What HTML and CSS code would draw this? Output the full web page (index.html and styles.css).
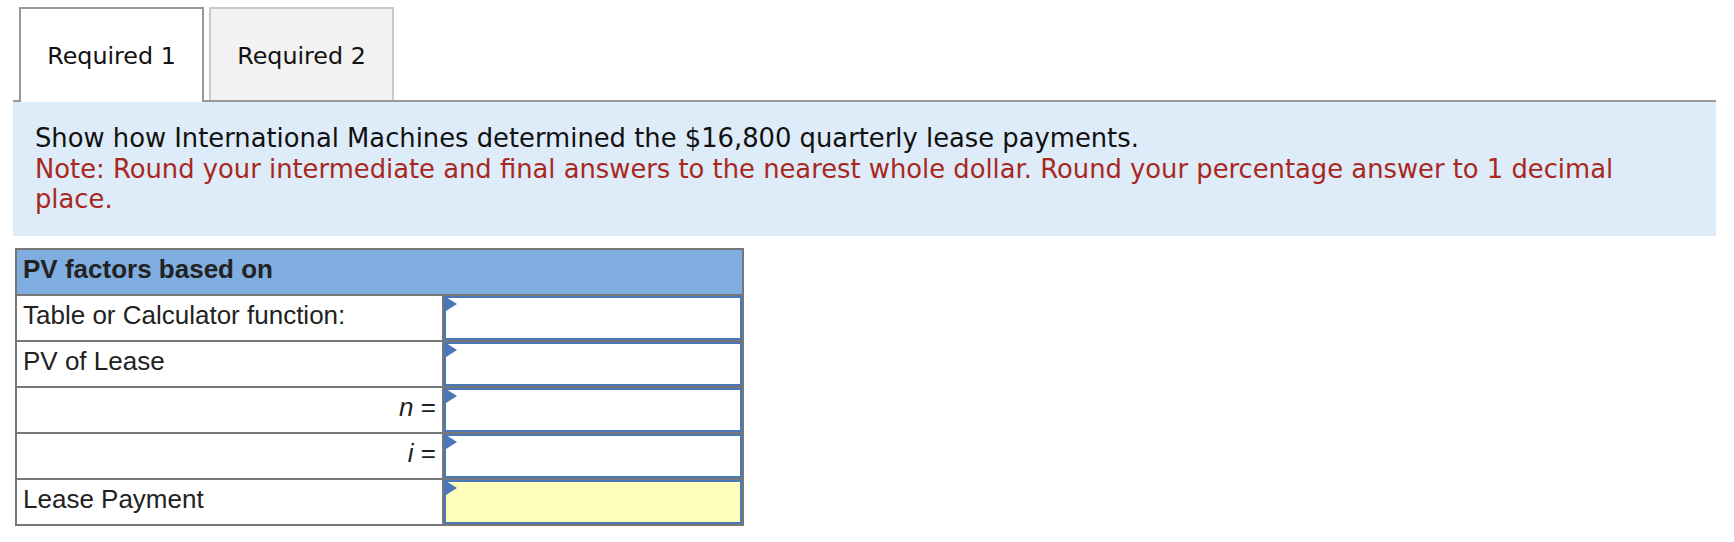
FILE: index.html
```html
<!DOCTYPE html>
<html lang="en">
	<head>
		<meta charset="UTF-8" />
		<meta name="viewport" content="width=device-width, initial-scale=1.0" />
		<title>Required 1</title>
		<link rel="stylesheet" href="styles.css">
	</head>
	<body>
		<div class="page">
			<div class="tabs">
				<div class="tab tab-active">Required 1</div>
				<div class="tab">Required 2</div>
			</div>

			<div class="prompt">
				<p>Show how International Machines determined the $16,800 quarterly lease payments.</p>
				<p class="note">Note: Round your intermediate and final answers to the nearest whole dollar. Round your percentage answer to 1 decimal place.</p>
			</div>

			<div class="factors">
				<div class="factors-head">PV factors based on</div>

				<div class="label">Table or Calculator function:</div>
				<div class="answer"><input type="text" class="answer-input" /></div>

				<div class="label">PV of Lease</div>
				<div class="answer"><input type="text" class="answer-input" /></div>

				<div class="label label-right"><i>n</i>&nbsp;=</div>
				<div class="answer"><input type="text" class="answer-input" /></div>

				<div class="label label-right"><i>i</i>&nbsp;=</div>
				<div class="answer"><input type="text" class="answer-input" /></div>

				<div class="label">Lease Payment</div>
				<div class="answer"><input type="text" class="answer-input answer-total" /></div>
			</div>
		</div>
	</body>
</html>
```

FILE: styles.css
```css
:root {
	--tab-border: #999;
	--tab-border-light: #c8c8c8;
	--prompt-bg: #deebf8;
	--note-color: #a8281e;
	--grid-line: #777;
	--head-bg: #80ade0;
	--input-border: #4a78b6;
	--input-total: #ffffbb;
}

* {
	box-sizing: border-box;
	margin: 0;
	padding: 0;
}

body {
	background: #fff;
	color: #111;
	font-family: 'DejaVu Sans', Verdana, sans-serif;
}

.page {
	padding: 7px 18px 0 13px;
}

/* Tabs */
.tabs {
	display: flex;
	align-items: flex-start;
	gap: 5px;
	padding-left: 6px;
	border-bottom: 2px solid var(--tab-border);
}

.tab {
	width: 185px;
	height: 93px;
	padding-top: 34px;
	text-align: center;
	font-size: 23.8px;
	line-height: 27px;
	background: #f2f2f2;
	border: 2px solid var(--tab-border-light);
	border-bottom: none;
}

.tab-active {
	height: 95px;
	margin-bottom: -2px;
	background: #fff;
	border-color: var(--tab-border);
}

/* Prompt */
.prompt {
	background: var(--prompt-bg);
	padding: 21px 22px 21px;
	font-size: 25.8px;
	line-height: 30.5px;
}

.note {
	color: var(--note-color);
}

/* PV factors grid */
.factors {
	display: grid;
	grid-template-columns: 425px 298px;
	grid-auto-rows: 44px;
	gap: 2px;
	width: 729px;
	margin: 12px 0 0 2px;
	border: 2px solid var(--grid-line);
	background: var(--grid-line);
	font-family: 'Liberation Sans', Arial, sans-serif;
	font-size: 26px;
	color: #222;
}

.factors-head {
	grid-column: 1 / -1;
	display: flex;
	align-items: center;
	padding: 0 6px 4px;
	background: var(--head-bg);
	font-weight: 700;
}

.label {
	display: flex;
	align-items: center;
	padding: 0 6px 4px;
	background: #fff;
}

.label-right {
	justify-content: flex-end;
}

.answer {
	position: relative;
	background: #fff;
}

.answer::before {
	content: '';
	position: absolute;
	top: 1px;
	left: 2px;
	border-left: 11px solid var(--input-border);
	border-top: 7px solid transparent;
	border-bottom: 7px solid transparent;
}

.answer-input {
	display: block;
	width: 100%;
	height: 100%;
	border: 2px solid var(--input-border);
	background: #fff;
	font: inherit;
	padding: 0 8px;
	outline: none;
}

.answer-total {
	background: var(--input-total);
}
```
